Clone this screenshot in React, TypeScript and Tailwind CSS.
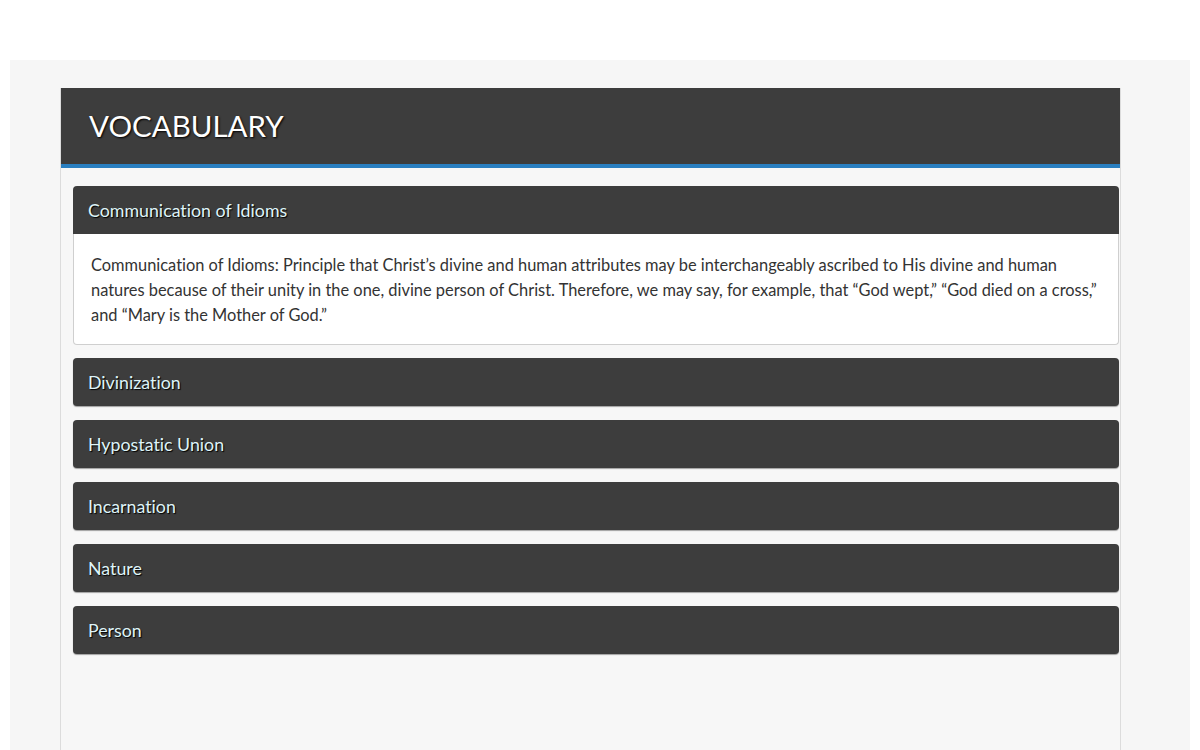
import React from "react";

const terms = ["Divinization", "Hypostatic Union", "Incarnation", "Nature", "Person"];

const ItemHeader: React.FC<{ title: string; open?: boolean }> = ({ title, open }) => (
  <div
    className={`h-[48px] flex items-center pl-[15px] bg-[#3d3d3d] text-[17.8px] text-[#dff4f8] [text-shadow:1px_1px_1px_#000] ${
      open ? "rounded-t-[4px]" : "rounded-[4px] shadow-[0_1px_1px_rgba(0,0,0,0.35)]"
    }`}
  >
    {title}
  </div>
);

export default function App() {
  return (
    <div className="min-h-[750px] bg-white pt-[60px] px-[10px] font-['Lato','Liberation_Sans',sans-serif] [font-variant-ligatures:none]">
      <div className="bg-[#f6f6f6] min-h-[690px] pt-[28px] pl-[50px] pr-[69px]">
        <div className="bg-[#f7f7f7] border-x border-[#dcdcdc] min-h-[662px]">
          <div className="bg-[#3d3d3d] h-[80px] flex items-center pl-[28px] border-b-4 border-[#2a7fc0]">
            <h1 className="text-white text-[29.5px] [text-shadow:1px_1px_2px_#000]">VOCABULARY</h1>
          </div>
          <div className="pl-[12px] pr-[1px] pt-[18px] flex flex-col">
            <div className="mb-[13px]">
              <ItemHeader title="Communication of Idioms" open />
              <div className="bg-white border border-t-0 border-[#cfcfcf] rounded-b-[4px] px-[17px] pt-[18px] pb-[17px] text-[16.4px] leading-[25px] text-[#333]">
                Communication of Idioms: Principle that Christ’s divine and human attributes may be interchangeably ascribed to His divine and human natures because of their unity in the one, divine person of Christ. Therefore, we may say, for example, that “God wept,” “God died on a cross,” and “Mary is the Mother of God.”
              </div>
            </div>
            <div className="flex flex-col gap-[14px]">
              {terms.map((t) => (
                <ItemHeader key={t} title={t} />
              ))}
            </div>
          </div>
        </div>
      </div>
    </div>
  );
}
